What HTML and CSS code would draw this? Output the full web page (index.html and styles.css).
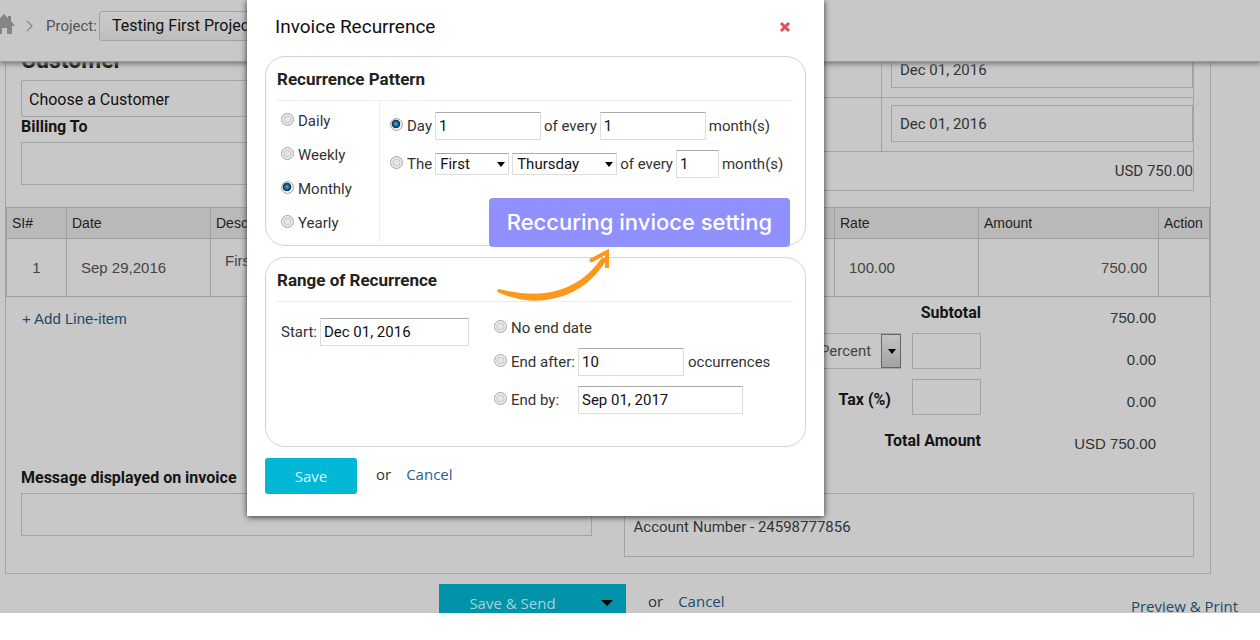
FILE: index.html
```html
<!DOCTYPE html>
<html lang="en">
<head>
<meta charset="utf-8">
<title>Invoice Recurrence</title>
<link rel="stylesheet" href="styles.css">
</head>
<body>
<div class="app">
  <header class="topbar">
    <a class="home" href="#" aria-label="Home">
      <svg width="15" height="21" viewBox="0 0 15 21" aria-hidden="true"><path d="M0 4 L4 0 L8 4 V2 H11 V7 L15 12 H12 V20 H7 V14 H2 V20 H0 Z" fill="#858585"/></svg>
    </a>
    <svg class="chevron" width="8" height="12" viewBox="0 0 8 12" aria-hidden="true"><path d="M1 1 L6 6 L1 11" fill="none" stroke="#8a8a8a" stroke-width="1.3"/></svg>
    <label for="project">Project:</label>
    <select id="project" class="project"><option>Testing First Project</option></select>
  </header>

  <main class="content">
    <section class="invoice">
      <div class="summary">
        <div class="customer">
          <h2 class="customer-title">Customer</h2>
          <select class="customer-select" aria-label="Customer"><option>Choose a Customer</option></select>
          <label class="bold" for="billing">Billing To</label>
          <textarea id="billing" class="box billing"></textarea>
        </div>
        <div class="meta">
          <div class="meta-row"><span></span><div class="meta-cell"><input class="box date" aria-label="Invoice date" value="Dec 01, 2016"></div></div>
          <div class="meta-row"><span></span><div class="meta-cell"><input class="box date" aria-label="Due date" value="Dec 01, 2016"></div></div>
          <div class="meta-total">USD 750.00</div>
        </div>
      </div>

      <table class="items">
        <colgroup><col class="c-sl"><col class="c-date"><col><col class="c-rate"><col class="c-amount"><col class="c-action"></colgroup>
        <thead><tr><th>SI#</th><th>Date</th><th>Description</th><th>Rate</th><th>Amount</th><th>Action</th></tr></thead>
        <tbody><tr><td class="center">1</td><td>Sep 29,2016</td><td class="desc">First item</td><td>100.00</td><td class="amount">750.00</td><td></td></tr></tbody>
      </table>

      <div class="totals">
        <a class="add" href="#">+ Add Line-item</a>
        <div class="calc">
          <strong class="wide">Subtotal</strong>
          <div class="pick percent"><select aria-label="Discount type"><option>Percent</option></select></div>
          <input class="box small" aria-label="Discount">
          <label class="bold tax" for="tax">Tax (%)</label>
          <input id="tax" class="box small">
          <strong class="wide">Total Amount</strong>
        </div>
        <div class="values">
          <div>750.00</div>
          <div>0.00</div>
          <div>0.00</div>
          <div>USD 750.00</div>
        </div>
      </div>

      <div class="notes">
        <div>
          <label class="bold" for="message">Message displayed on invoice</label>
          <textarea id="message" class="box message-box"></textarea>
        </div>
        <textarea class="box account" aria-label="Account details">Account Number - 24598777856</textarea>
      </div>
    </section>

    <footer class="actions">
      <button class="send" type="button">Save &amp; Send</button>
      <span>or</span>
      <a href="#">Cancel</a>
      <a class="preview" href="#">Preview &amp; Print</a>
    </footer>
  </main>

  <form class="modal" role="dialog" aria-labelledby="modal-title">
    <div class="modal-head">
      <h1 id="modal-title">Invoice Recurrence</h1>
      <button class="close" type="button" aria-label="Close">
        <svg width="12" height="12" viewBox="0 0 12 12" aria-hidden="true"><path d="M2 2 L10 10 M10 2 L2 10" stroke="#da5257" stroke-width="3"/></svg>
      </button>
    </div>

    <section class="panel">
      <h2>Recurrence Pattern</h2>
      <div class="pattern">
        <div class="freq">
          <label><input type="radio" name="freq">Daily</label>
          <label><input type="radio" name="freq">Weekly</label>
          <label><input type="radio" name="freq" checked>Monthly</label>
          <label><input type="radio" name="freq">Yearly</label>
        </div>
        <div class="monthly">
          <div class="line">
            <label><input type="radio" name="month" checked>Day</label>
            <input class="field" aria-label="Day" value="1">
            <span>of every</span>
            <input class="field" aria-label="Months" value="1">
            <span>month(s)</span>
          </div>
          <div class="line">
            <label><input type="radio" name="month">The</label>
            <div class="pick order"><select aria-label="Order"><option>First</option></select></div>
            <div class="pick weekday"><select aria-label="Weekday"><option>Thursday</option></select></div>
            <span>of every</span>
            <input class="field short" aria-label="Months interval" value="1">
            <span>month(s)</span>
          </div>
        </div>
      </div>
    </section>

    <section class="panel">
      <h2>Range of Recurrence</h2>
      <div class="range">
        <div class="start">
          <label for="start">Start:</label>
          <input id="start" class="field medium" value="Dec 01, 2016">
        </div>
        <div class="end">
          <label class="end-none"><input type="radio" name="end">No end date</label>
          <div class="end-line">
            <label><input type="radio" name="end">End after:</label>
            <input class="field" aria-label="Occurrences" value="10">
            <span>occurrences</span>
          </div>
          <div class="end-line">
            <label><input type="radio" name="end">End by:</label>
            <input class="field long" aria-label="End date" value="Sep 01, 2017">
          </div>
        </div>
      </div>
    </section>

    <div class="modal-actions">
      <button class="save" type="button">Save</button>
      <span>or</span>
      <a href="#">Cancel</a>
    </div>

    <div class="callout">Reccuring invioce setting</div>
    <svg class="arrow" width="116" height="56" viewBox="0 0 116 56" aria-hidden="true">
      <path d="M1 44 C42 63 86 50 109 12 L105 12 C82 46 44 54 2 43 Z" fill="#fc981c" stroke="#fc981c" stroke-width="2" stroke-linejoin="round"/>
      <path d="M93 14 L110 5 L110 21" fill="none" stroke="#fc981c" stroke-width="4"/>
    </svg>
  </form>
</div>
</body>
</html>
```

FILE: styles.css
```css
* { box-sizing: border-box; }

body {
  margin: 0;
  background: #fff;
  font: 15px/20px Roboto, "Liberation Sans", sans-serif;
  color: #333;
}

h1, h2 { margin: 0; }
a { color: #1c4a6c; text-decoration: none; }
input, select, textarea, button { font: inherit; color: inherit; margin: 0; }
select { appearance: none; }

.app {
  position: relative;
  display: flex;
  flex-direction: column;
  height: calc(100vh - 27px);
  overflow: hidden;
  background: #c8c8c8;
}

/* Top bar */
.topbar {
  position: relative;
  z-index: 1;
  display: flex;
  flex: none;
  align-items: center;
  height: 62px;
  padding-bottom: 9px;
  border-bottom: 1px solid #999;
  background: #c8c8c8;
  box-shadow: 0 2px 5px #777;
  color: #555;
}
.home { display: flex; padding-bottom: 4px; }
.chevron { margin: 0 12px 0 11px; }
.project {
  width: 200px;
  height: 30px;
  margin-left: 2px;
  padding: 0 12px;
  border: 1px solid #a2a2a2;
  border-radius: 3px;
  background: linear-gradient(#cbcbcb, #bebebe);
  font-size: 16px;
  color: #111;
}

/* Invoice sheet, scrolled partly under the top bar */
.content { flex: 1; margin-top: -13px; overflow: hidden; }
.invoice {
  margin: 0 49px 0 5px;
  border: solid #a3a3a3;
  border-width: 0 1px 1px;
}
.box {
  display: block;
  width: 100%;
  border: 1px solid #a3a3a3;
  border-radius: 0;
  background: transparent;
  resize: none;
  overflow: hidden;
}
.bold, strong { font-size: 16px; font-weight: 700; color: #151515; }
.summary {
  display: grid;
  grid-template-columns: 1fr 1fr;
  gap: 32px;
  padding: 0 16px 0 15px;
}
.customer-title {
  padding-bottom: 7px;
  font-size: 23px;
  line-height: 24px;
  color: #111;
}
.customer-select {
  display: block;
  width: 100%;
  height: 37px;
  padding: 2px 7px 0;
  border: 1px solid #a3a3a3;
  border-radius: 2px;
  background: transparent;
  font-size: 16px;
  color: #111;
}
.billing { height: 43px; margin-top: 5px; }
.meta {
  height: 142px;
  border: solid #a3a3a3;
  border-width: 0 1px 1px;
}
.meta-row {
  display: grid;
  grid-template-columns: 1fr 312px;
  height: 54px;
  border-bottom: 1px solid #a3a3a3;
}
.meta-row:first-child { height: 49px; }
.meta-cell {
  display: flex;
  align-items: end;
  padding: 0 0 9px 9px;
  border-left: 1px solid #a3a3a3;
}
.date { height: 37px; flex: none; padding: 0 8px; }
.meta-total { padding-top: 9px; text-align: right; }

.items {
  width: 100%;
  margin-top: 16px;
  border-collapse: collapse;
  table-layout: fixed;
  font-family: "Liberation Sans", sans-serif;
}
.items th, .items td { border: 1px solid #a0a0a0; }
.items th {
  height: 31px;
  padding: 0 5px;
  background: #b9b9b9;
  font-size: 14px;
  font-weight: 400;
  text-align: left;
  color: #222;
}
.items td { height: 58px; padding: 0 14px; color: #444; }
.items .center { text-align: center; }
.items .amount { padding-right: 11px; text-align: right; }
.items .desc { padding-bottom: 14px; }
.c-sl { width: 60px; }
.c-date { width: 144px; }
.c-rate { width: 144px; }
.c-amount { width: 180px; }
.c-action { width: 51px; }

.totals { display: flex; padding-right: 54px; padding-left: 16px; }
.add {
  padding-top: 12px;
  font-family: "Liberation Sans", sans-serif;
}
.calc {
  display: grid;
  grid-template-columns: 100px 69px;
  grid-template-rows: 20px 36px 36px 32px;
  column-gap: 11px;
  row-gap: 10px;
  align-items: center;
  margin-left: auto;
  padding-top: 6px;
}
.calc .wide { grid-column: 1 / 3; text-align: right; }
.calc .small { height: 36px; }
.calc .tax { padding-top: 6px; padding-right: 10px; text-align: right; }
.values {
  width: 175px;
  font-family: "Liberation Sans", sans-serif;
  line-height: 42px;
  text-align: right;
}

.pick { position: relative; }
.pick select {
  display: block;
  width: 100%;
  height: 22px;
  padding: 0 4px;
  border: 1px solid #ddd;
  border-top-color: #aaa;
  border-radius: 0;
  background: #fff;
  color: #111;
}
.pick::after {
  content: "";
  position: absolute;
  right: 4px;
  top: 9px;
  border: solid transparent;
  border-width: 5px 4px 0;
  border-top-color: #000;
  pointer-events: none;
}
.pick.percent select {
  height: 36px;
  padding: 0 18px;
  border-color: #a3a3a3;
  background: transparent;
  color: #444;
}
.percent::before {
  content: "";
  position: absolute;
  right: 0;
  top: 1px;
  bottom: 1px;
  width: 18px;
  border: 1px solid #666;
  background: linear-gradient(#c4c4c4, #a2a2a2);
  pointer-events: none;
}
.percent::after { right: 5px; top: 16px; }

.notes {
  display: grid;
  grid-template-columns: 1fr 1fr;
  gap: 32px;
  padding: 3px 16px 16px 15px;
}
.message-box { height: 43px; margin-top: 5px; }
.account { height: 64px; margin-top: 25px; padding: 23px 9px; }

.actions {
  display: flex;
  align-items: start;
  margin-top: 10px;
  padding-right: 22px;
  padding-left: 439px;
  font: 15px/34px "Open Sans", sans-serif;
}
.send {
  position: relative;
  width: 187px;
  height: 38px;
  margin-right: 22px;
  padding: 0 40px 0 0;
  border: 0;
  background: #0093a9;
  color: #a3d3da;
}
.send::after {
  content: "";
  position: absolute;
  right: 13px;
  top: 16px;
  border: solid transparent;
  border-width: 6px 6px 0;
  border-top-color: #000;
}
.actions a { margin-left: 15px; }
.actions .preview { margin-left: auto; padding-top: 5px; }

/* Recurrence dialog */
.modal {
  position: absolute;
  z-index: 2;
  top: 0;
  left: 247px;
  width: 577px;
  padding: 0 18px 22px;
  background: #fff;
  box-shadow: 0 1px 6px #333;
}
.modal-head {
  display: flex;
  align-items: center;
  justify-content: space-between;
  height: 56px;
  padding: 0 15px 3px 10px;
}
.modal-head h1 { font-size: 19px; font-weight: 400; color: #111; }
.close { display: flex; padding: 0; border: 0; background: none; }

.panel {
  height: 190px;
  margin-bottom: 11px;
  padding: 0 11px;
  border: 1px solid #d4d4d4;
  border-radius: 20px;
}
.panel h2 {
  padding: 12px 0 11px;
  border-bottom: 1px solid #eee;
  font-size: 17px;
  line-height: 20px;
  color: #222;
}
.panel label { display: flex; align-items: center; gap: 4px; }

input[type="radio"] {
  appearance: none;
  flex: none;
  width: 13px;
  height: 13px;
  margin-bottom: 4px;
  border: 1px solid #a2a2a2;
  border-radius: 50%;
  background: radial-gradient(circle, #e6e6e6 30%, #c8c8c8 45%, #f2f2f2 60%);
}
input[type="radio"]:checked {
  background: radial-gradient(circle at 45% 45%, #5bb4da 0, #10486f 35%, #0f3857 45%, #f0f4f7 55%);
}

.pattern { display: flex; }
.freq {
  display: grid;
  grid-auto-rows: 34px;
  width: 103px;
  height: 141px;
  padding: 3px 0 0 4px;
  border-right: 1px solid #eee;
}
.monthly { padding: 11px 0 0 10px; white-space: nowrap; }
.line { display: flex; align-items: center; gap: 3px; height: 28px; margin-bottom: 10px; }
.field {
  width: 106px;
  height: 28px;
  padding: 0 3px;
  border: 1px solid #ddd;
  border-top-color: #aaa;
  background: #fff;
  color: #111;
}
.short { width: 43px; }
.medium { width: 149px; }
.long { width: 165px; }
.order { width: 74px; }
.weekday { width: 105px; }

.range { display: flex; padding: 16px 0 0 4px; }
.start { display: flex; align-items: center; gap: 3px; width: 213px; height: 28px; }
.end-none { height: 20px; }
.end-line { display: flex; align-items: center; gap: 4px; height: 28px; margin-top: 10px; }
.end-line label { width: 80px; white-space: nowrap; }

.modal-actions {
  display: flex;
  align-items: center;
  font: 15px/20px "Open Sans", sans-serif;
}
.modal-actions span, .modal-actions a { padding-bottom: 4px; }
.modal-actions a { margin-left: 15px; color: #1c6594; }
.save {
  width: 92px;
  height: 36px;
  margin-right: 19px;
  border: 0;
  border-radius: 3px;
  background: #00b7d6;
  color: #d9f7fb;
}

/* Annotation over the dialog */
.callout {
  position: absolute;
  left: 242px;
  top: 198px;
  width: 301px;
  border-radius: 4px;
  background: #9190ff;
  font: 500 22px/48px Inter, sans-serif;
  padding-bottom: 1px;
  color: #fff;
  text-align: center;
  white-space: nowrap;
}
.arrow { position: absolute; left: 250px; top: 247px; }
```
